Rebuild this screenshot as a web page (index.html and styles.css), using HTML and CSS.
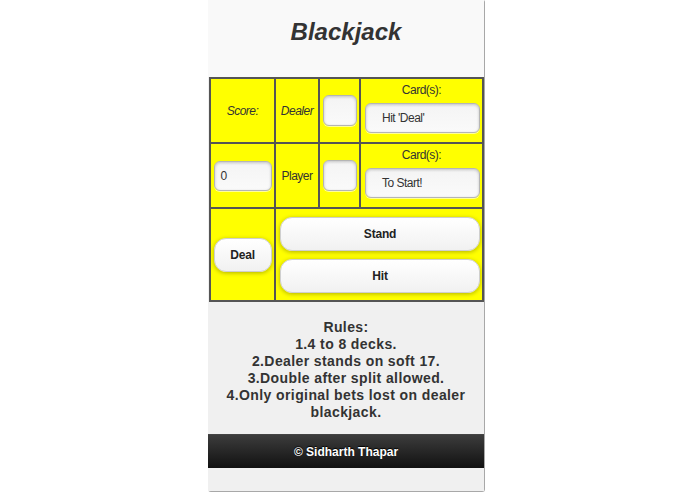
FILE: index.html
```html
<!DOCTYPE html>
<html>
<head>
<meta charset="utf-8">
<link rel="stylesheet" href="styles.css">
</head>
<body>
<div class="phone">
  <header class="header"><h1>Blackjack</h1></header>
  <table class="board">
    <colgroup><col class="c1"><col class="c2"><col class="c3"><col class="c4"></colgroup>
    <tr class="r1">
      <td class="label it">Score:</td>
      <td class="label it">Dealer</td>
      <td><div class="box"></div></td>
      <td class="cards"><div class="cap">Card(s):</div><div class="field">Hit 'Deal'</div></td>
    </tr>
    <tr class="r2">
      <td><div class="score">0</div></td>
      <td class="label">Player</td>
      <td><div class="box"></div></td>
      <td class="cards"><div class="cap">Card(s):</div><div class="field">To Start!</div></td>
    </tr>
    <tr class="r3">
      <td><button class="btn deal">Deal</button></td>
      <td colspan="3"><div class="stack"><button class="btn wide">Stand</button><button class="btn wide">Hit</button></div></td>
    </tr>
  </table>
  <section class="rules">
    <p>Rules:<br>1.4 to 8 decks.<br>2.Dealer stands on soft 17.<br>3.Double after split allowed.<br>4.Only original bets lost on dealer blackjack.</p>
  </section>
  <footer class="footer">© Sidharth Thapar</footer>
  <div class="tail"></div>
</div>
</body>
</html>
```
FILE: styles.css
```css
html, body { margin: 0; padding: 0; background: #fff; }
body { font-family: "Liberation Sans", Arial, sans-serif; color: #333; }
.phone {
  width: 276px;
  margin-left: 208px;
  height: 491px;
  background: #f0f0f0;
  border-right: 1px solid #a8a8a8;
  border-bottom: 1px solid #a8a8a8;
  display: flex;
  flex-direction: column;
  border-radius: 2px 2px 3px 3px;
}
.header {
  height: 77px;
  background: #f9f9f9;
  display: flex;
  align-items: center;
  justify-content: center;
}
.header h1 {
  margin: 0;
  font-size: 24px;
  font-weight: bold;
  font-style: italic;
  color: #333;
  position: relative;
  top: -7px;
}
.board {
  border-collapse: collapse;
  margin-left: 1px;
  width: 275px;
  background: #ffff00;
  table-layout: fixed;
  border: 2px solid #555;
}
.board td {
  border: 2px solid #555;
  padding: 0;
  text-align: center;
  vertical-align: middle;
  font-size: 12px;
  letter-spacing: -0.5px;
}
.c1 { width: 65px; } .c2 { width: 44px; } .c3 { width: 41px; } .c4 { width: 123px; }
.r1, .r2 { height: 65px; }
.r3 { height: 93px; }
.it { font-style: italic; }
.box, .score, .field {
  background: linear-gradient(#f4f4f4, #fafafa);
  border: 1px solid #b5b5b5;
  border-radius: 6px;
  box-shadow: inset 0 1px 3px rgba(0,0,0,0.2), 0 1px 0 rgba(255,255,255,0.6);
  box-sizing: border-box;
}
.box { width: 34px; height: 31px; margin: 0 auto; }
.score { width: 58px; height: 30px; margin: 0 auto; text-align: left; padding-left: 6px; line-height: 28px; }
.cards { vertical-align: top !important; }
.cap { margin-top: 4px; height: 14px; line-height: 14px; }
.field { width: 115px; height: 30px; margin: 6px 0 0 4px; text-align: left; padding-left: 16px; line-height: 28px; }
.btn {
  font-family: "Liberation Sans", Arial, sans-serif;
  font-weight: bold;
  font-size: 12px;
  color: #222;
  background: linear-gradient(#ffffff, #f1f1f1);
  border: 1px solid #cfcfcf;
  border-radius: 12px;
  box-shadow: 0 1px 4px rgba(0,0,0,0.3);
  height: 34px;
  padding: 0;
  letter-spacing: -0.2px;
}
.deal { width: 58px; display: block; margin: 0 auto; }
.stack { display: flex; flex-direction: column; gap: 8px; padding: 1px 2px 0 4px; }
.wide { width: 100%; }
.rules {
  flex: 1;
  display: flex;
  align-items: flex-start;
  justify-content: center;
}
.rules p {
  margin: 17px 0 0;
  text-align: center;
  font-weight: bold;
  font-size: 14px;
  line-height: 17px;
  letter-spacing: 0.4px;
  color: #333;
  padding: 0 14px;
}
.footer {
  height: 33px;
  background: linear-gradient(#3c3c3c, #111);
  color: #fff;
  font-weight: bold;
  font-size: 12px;
  display: flex;
  align-items: center;
  justify-content: center;
  text-shadow: 0 -1px 1px #000;
  border-top: 1px solid #444;
}
.tail { height: 23px; background: #f0f0f0; }
```
